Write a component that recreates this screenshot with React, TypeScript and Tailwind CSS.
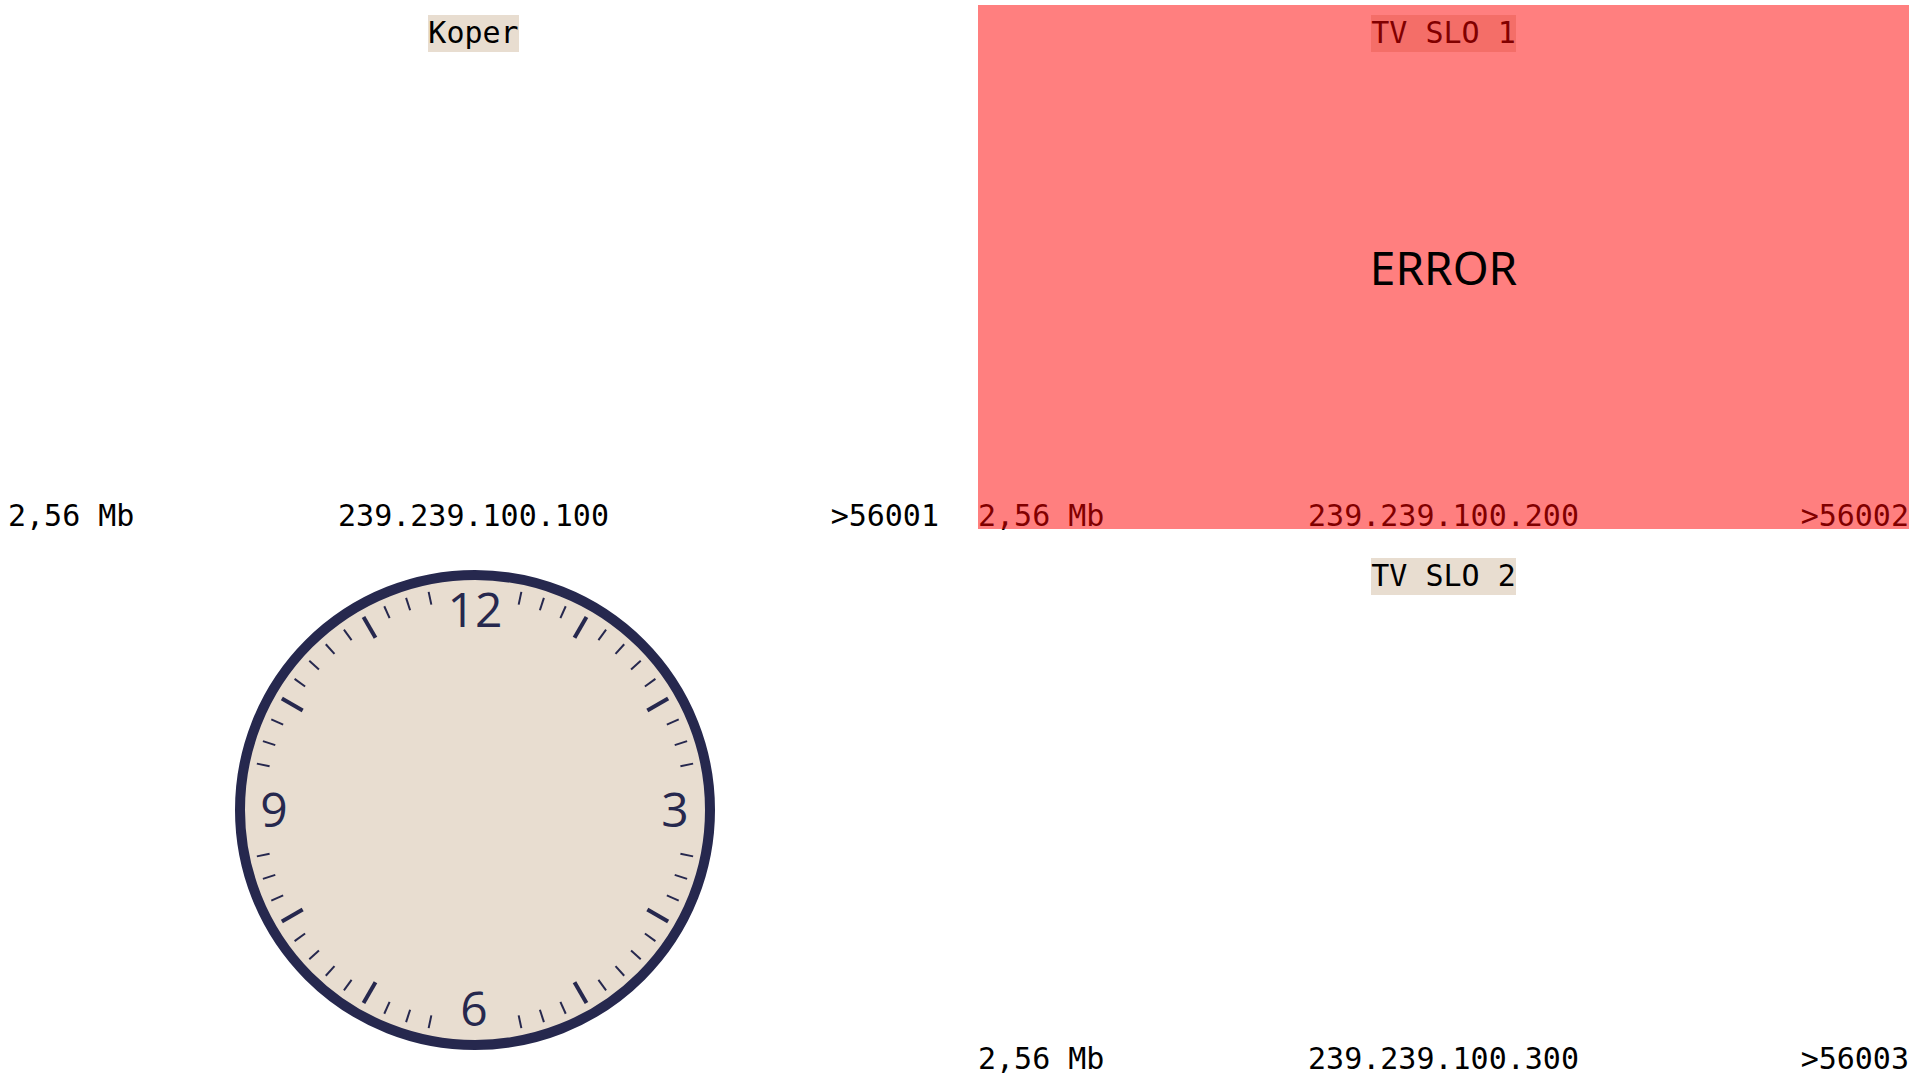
import React from 'react';

interface Stream {
  name: string;
  rate: string;
  ip: string;
  port: string;
  error?: boolean;
}

const mono = "font-['DejaVu_Sans_Mono',monospace]";

const StreamPanel: React.FC<{ stream: Stream }> = ({ stream }) => {
  return (
    <div className={`relative flex flex-col items-center ${mono} text-[30px] text-black`}>
      {/* Label */}
      <div className="mt-[10px] bg-[#e8ddd0] leading-[35px] pb-[2px] whitespace-pre">{stream.name}</div>
      <div className="flex-1" />
      {/* Info row */}
      <div className="grid w-full grid-cols-3 leading-[30px] -mb-[2px] whitespace-pre">
        <span className="text-left">{stream.rate}</span>
        <span className="text-center">{stream.ip}</span>
        <span className="text-right">{stream.port}</span>
      </div>

      {stream.error && (
        <>
          <div className="absolute inset-0 bg-[rgba(255,0,0,0.5)]" />
          <div className="absolute inset-0 flex items-center justify-center font-['Noto_Sans',sans-serif] text-[46px] text-black">
            ERROR
          </div>
        </>
      )}
    </div>
  );
};

const skip = [59, 0, 1, 14, 15, 16, 29, 30, 31, 44, 45, 46];

const Clock: React.FC = () => {
  const cx = 240;
  const cy = 240;
  const ticks = Array.from({ length: 60 }, (_, m) => m).filter((m) => !skip.includes(m));

  return (
    <svg width="480" height="480" viewBox="0 0 480 480">
      <circle cx={cx} cy={cy} r={235} fill="#e8ddd0" stroke="#26284e" strokeWidth={10} />
      {ticks.map((m) => {
        const hour = m % 5 === 0;
        const a = (m * 6 * Math.PI) / 180;
        const r1 = hour ? 199 : 210;
        const r2 = 223;
        return (
          <line
            key={m}
            x1={cx + r1 * Math.sin(a)}
            y1={cy - r1 * Math.cos(a)}
            x2={cx + r2 * Math.sin(a)}
            y2={cy - r2 * Math.cos(a)}
            stroke="#26284e"
            strokeWidth={hour ? 4 : 2}
          />
        );
      })}
      <g fill="#26284e" fontFamily="'Open Sans', sans-serif" fontSize="48" textAnchor="middle">
        <text x={240} y={57}>12</text>
        <text x={440} y={257}>3</text>
        <text x={239} y={456}>6</text>
        <text x={39} y={257}>9</text>
      </g>
    </svg>
  );
};

const App: React.FC = () => {
  const streams: Stream[] = [
    { name: 'Koper', rate: '2,56 Mb', ip: '239.239.100.100', port: '>56001' },
    { name: 'TV SLO 1', rate: '2,56 Mb', ip: '239.239.100.200', port: '>56002', error: true },
    { name: 'TV SLO 2', rate: '2,56 Mb', ip: '239.239.100.300', port: '>56003' },
  ];

  return (
    <div className="h-[1080px] w-[1920px] overflow-hidden bg-white">
      <div className="grid grid-cols-[931px_931px] grid-rows-[524px_524px] gap-x-[39px] gap-y-[19px] pl-[8px] pt-[5px]">
        <StreamPanel stream={streams[0]} />
        <StreamPanel stream={streams[1]} />
        {/* Clock cell */}
        <div className="pl-[227px] pt-[22px]">
          <Clock />
        </div>
        <StreamPanel stream={streams[2]} />
      </div>
    </div>
  );
};

export default App;
